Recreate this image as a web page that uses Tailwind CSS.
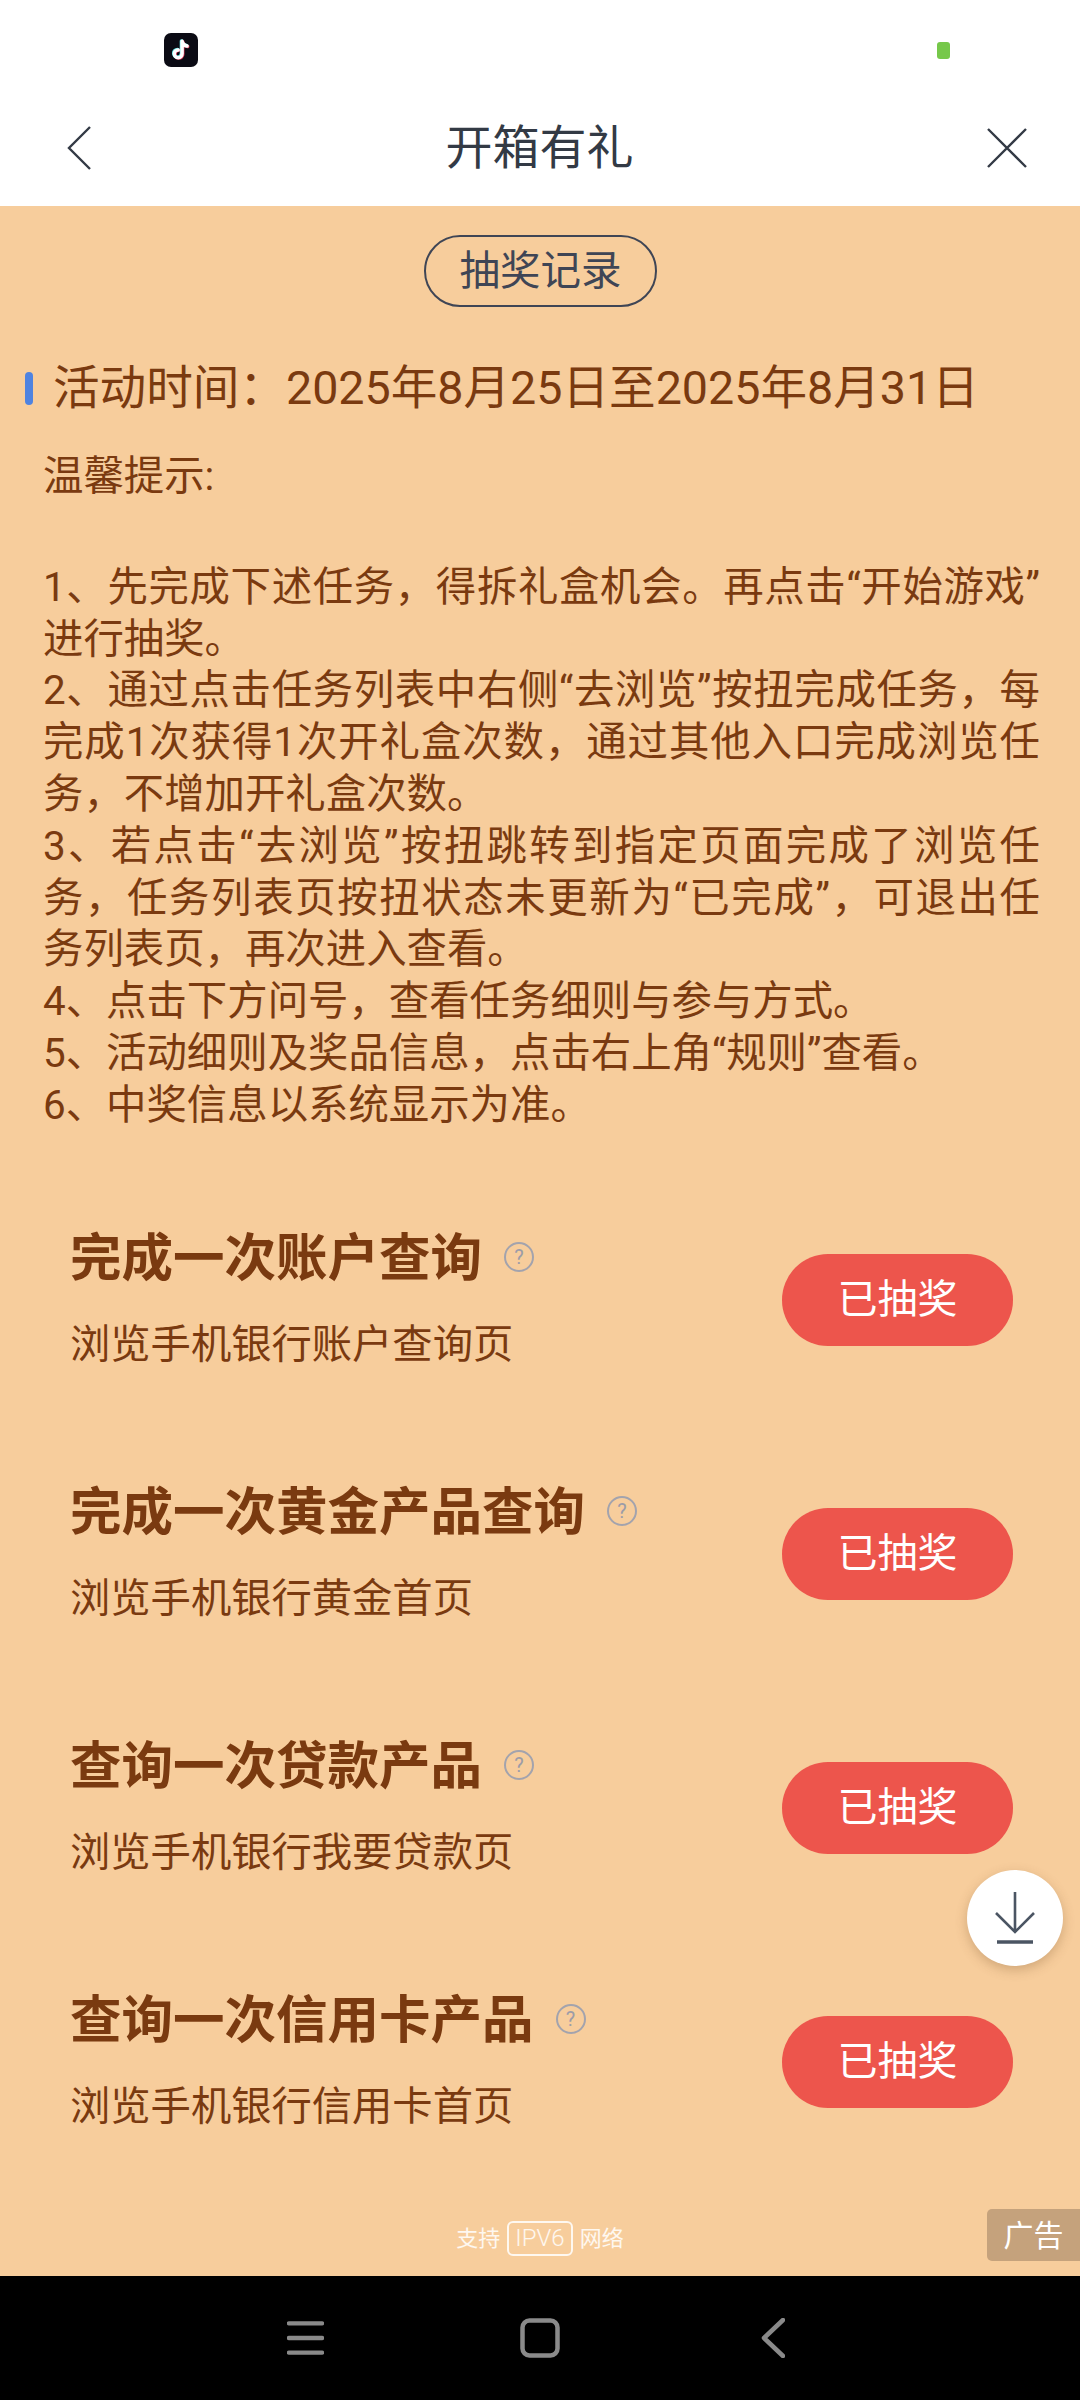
<!DOCTYPE html>
<html lang="zh-CN">
<head>
<meta charset="UTF-8" />
<title>开箱有礼</title>
<script src="https://cdn.jsdelivr.net/npm/@tailwindcss/browser@4"></script>
</head>
<body class="font-['Roboto','Noto_Sans_CJK_SC',sans-serif] bg-black">
<div class="relative w-[1080px] h-[2400px] flex flex-col overflow-hidden bg-[#f7cd9c]">

  <!-- status bar -->
  <div class="h-[90px] bg-white flex items-center justify-between pl-[164px] pr-[130px] pt-[10px]">
    <div class="w-[34px] h-[34px] rounded-[7px] bg-[#0b0b14] flex items-center justify-center">
      <svg viewBox="0 0 24 24" class="w-[26px] h-[26px]" fill="none" stroke-width="3.2" stroke-linecap="round">
        <path d="M13.6 4.4v11.5a3.6 3.6 0 1 1-3.6-3.6M13.6 4.4c.5 2.6 2.2 4 4.6 4.3" stroke="#e8375a"/>
        <path d="M12.4 3.6v11.5a3.6 3.6 0 1 1-3.6-3.6M12.4 3.6c.5 2.6 2.2 4 4.6 4.3" stroke="#5ee3e6"/>
        <path d="M13 4v11.5a3.6 3.6 0 1 1-3.6-3.6M13 4c.5 2.6 2.2 4 4.6 4.3" stroke="#ffffff"/>
      </svg>
    </div>
    <div class="w-[13px] h-[17px] rounded-[3px] bg-[#76c84a]"></div>
  </div>

  <!-- nav -->
  <div class="h-[116px] bg-white flex items-center justify-between pl-[66px] pr-[53px]">
    <svg viewBox="0 0 26 46" class="w-[26px] h-[46px]" fill="none" stroke="#333a45" stroke-width="2.4"><path d="M24 2 3 23l21 21"/></svg>
    <div class="text-[47px] leading-[60px] text-[#333a45]">开箱有礼</div>
    <svg viewBox="0 0 40 40" class="w-[40px] h-[40px]" fill="none" stroke="#333a45" stroke-width="2.4"><path d="M1 1l38 38M39 1 1 39"/></svg>
  </div>

  <!-- record button -->
  <div class="flex justify-center mt-[29px] pl-[1px]">
    <div class="w-[233px] h-[72px] rounded-full border-2 border-[#3f4555] flex items-center justify-center text-[40.5px] text-[#3f4555]">抽奖记录</div>
  </div>

  <!-- activity time -->
  <div class="flex items-center mt-[51px] pl-[25px] h-[60px]">
    <div class="w-[8px] h-[33px] rounded-full bg-[#4f83e0]"></div>
    <div class="ml-[20px] text-[46.6px] leading-[60px] text-[#7a3a10] whitespace-nowrap">活动时间：2025年8月25日至2025年8月31日</div>
  </div>

  <!-- tips -->
  <div class="mt-[33px] pl-[43px] w-[1040px] text-[40.4px] leading-[51.8px] text-[#7a3a10]">
    <p>温馨提示:</p>
    <p class="mt-[59px] text-justify">1、先完成下述任务，得拆礼盒机会。再点击“开始游戏”进行抽奖。</p>
    <p class="text-justify">2、通过点击任务列表中右侧“去浏览”按扭完成任务，每完成1次获得1次开礼盒次数，通过其他入口完成浏览任务，不增加开礼盒次数。</p>
    <p class="text-justify">3、若点击“去浏览”按扭跳转到指定页面完成了浏览任务，任务列表页按扭状态未更新为“已完成”，可退出任务列表页，再次进入查看。</p>
    <p>4、点击下方问号，查看任务细则与参与方式。</p>
    <p>5、活动细则及奖品信息，点击右上角“规则”查看。</p>
    <p>6、中奖信息以系统显示为准。</p>
  </div>

  <!-- task rows -->
  <div class="mt-[41px] pl-[70px] pr-[67px] flex flex-col">
    <div class="h-[254px] flex items-center justify-between">
      <div>
        <div class="flex items-center h-[60px]">
          <span class="text-[51.5px] leading-[60px] font-bold text-[#7a3a10]">完成一次账户查询</span>
          <span class="ml-[22px] -mt-[4px] w-[30px] h-[30px] rounded-full border-2 border-[#a3a3ad] flex items-center justify-center text-[20px] text-[#9c9ca8]">?</span>
        </div>
        <div class="mt-[30px] text-[40.3px] leading-[52px] text-[#7a3a10]">浏览手机银行账户查询页</div>
      </div>
      <div class="w-[231px] h-[92px] rounded-full bg-[#ed554c] flex items-center justify-center text-[40px] text-white">已抽奖</div>
    </div>
    <div class="h-[254px] flex items-center justify-between">
      <div>
        <div class="flex items-center h-[60px]">
          <span class="text-[51.5px] leading-[60px] font-bold text-[#7a3a10]">完成一次黄金产品查询</span>
          <span class="ml-[22px] -mt-[4px] w-[30px] h-[30px] rounded-full border-2 border-[#a3a3ad] flex items-center justify-center text-[20px] text-[#9c9ca8]">?</span>
        </div>
        <div class="mt-[30px] text-[40.3px] leading-[52px] text-[#7a3a10]">浏览手机银行黄金首页</div>
      </div>
      <div class="w-[231px] h-[92px] rounded-full bg-[#ed554c] flex items-center justify-center text-[40px] text-white">已抽奖</div>
    </div>
    <div class="h-[254px] flex items-center justify-between">
      <div>
        <div class="flex items-center h-[60px]">
          <span class="text-[51.5px] leading-[60px] font-bold text-[#7a3a10]">查询一次贷款产品</span>
          <span class="ml-[22px] -mt-[4px] w-[30px] h-[30px] rounded-full border-2 border-[#a3a3ad] flex items-center justify-center text-[20px] text-[#9c9ca8]">?</span>
        </div>
        <div class="mt-[30px] text-[40.3px] leading-[52px] text-[#7a3a10]">浏览手机银行我要贷款页</div>
      </div>
      <div class="w-[231px] h-[92px] rounded-full bg-[#ed554c] flex items-center justify-center text-[40px] text-white">已抽奖</div>
    </div>
    <div class="h-[254px] flex items-center justify-between">
      <div>
        <div class="flex items-center h-[60px]">
          <span class="text-[51.5px] leading-[60px] font-bold text-[#7a3a10]">查询一次信用卡产品</span>
          <span class="ml-[22px] -mt-[4px] w-[30px] h-[30px] rounded-full border-2 border-[#a3a3ad] flex items-center justify-center text-[20px] text-[#9c9ca8]">?</span>
        </div>
        <div class="mt-[30px] text-[40.3px] leading-[52px] text-[#7a3a10]">浏览手机银行信用卡首页</div>
      </div>
      <div class="w-[231px] h-[92px] rounded-full bg-[#ed554c] flex items-center justify-center text-[40px] text-white">已抽奖</div>
    </div>
  </div>

  <!-- ipv6 footer -->
  <div class="mt-auto h-[55px] flex items-start justify-center text-[22px] leading-[35px] text-white/85">
    <div class="flex items-center gap-[7px]">
      <span>支持</span>
      <span class="h-[35px] px-[6px] rounded-[6px] border-2 border-white/85 flex items-center text-[24px] font-light">IPV6</span>
      <span>网络</span>
    </div>
  </div>

  <!-- system nav -->
  <div class="h-[124px] bg-black flex items-center justify-between pl-[287px] pr-[295px]">
    <svg viewBox="0 0 38 36" class="w-[37px] h-[36px]" fill="none" stroke="#8a8a8a" stroke-width="4.5" stroke-linecap="round"><path d="M2 3h34M2 18h34M2 33h34"/></svg>
    <svg viewBox="0 0 40 40" class="w-[40px] h-[40px] mr-[5px]" fill="none" stroke="#8a8a8a" stroke-width="4.5"><rect x="2.5" y="2.5" width="35" height="35" rx="7"/></svg>
    <svg viewBox="0 0 24 40" class="w-[24px] h-[40px]" fill="none" stroke="#8a8a8a" stroke-width="4.5" stroke-linecap="round" stroke-linejoin="round"><path d="M22 2 3 20l19 18"/></svg>
  </div>

  <!-- floating download -->
  <div class="absolute left-[967px] top-[1870px] w-[96px] h-[96px] rounded-full bg-white shadow-[0_4px_12px_rgba(120,80,40,0.3)] flex items-center justify-center">
    <svg viewBox="0 0 44 56" class="w-[44px] h-[56px]" fill="none" stroke="#4b5563" stroke-width="2.6"><path d="M22 2v40M3 23l19 19 19-19"/><path d="M4 52h36" stroke-width="3.4"/></svg>
  </div>

  <!-- ad badge -->
  <div class="absolute left-[987px] top-[2209px] w-[93px] h-[52px] rounded-l-[5px] bg-[#c5a27c] flex items-center justify-center text-[30px] text-white">广告</div>
</div>
</body>
</html>
